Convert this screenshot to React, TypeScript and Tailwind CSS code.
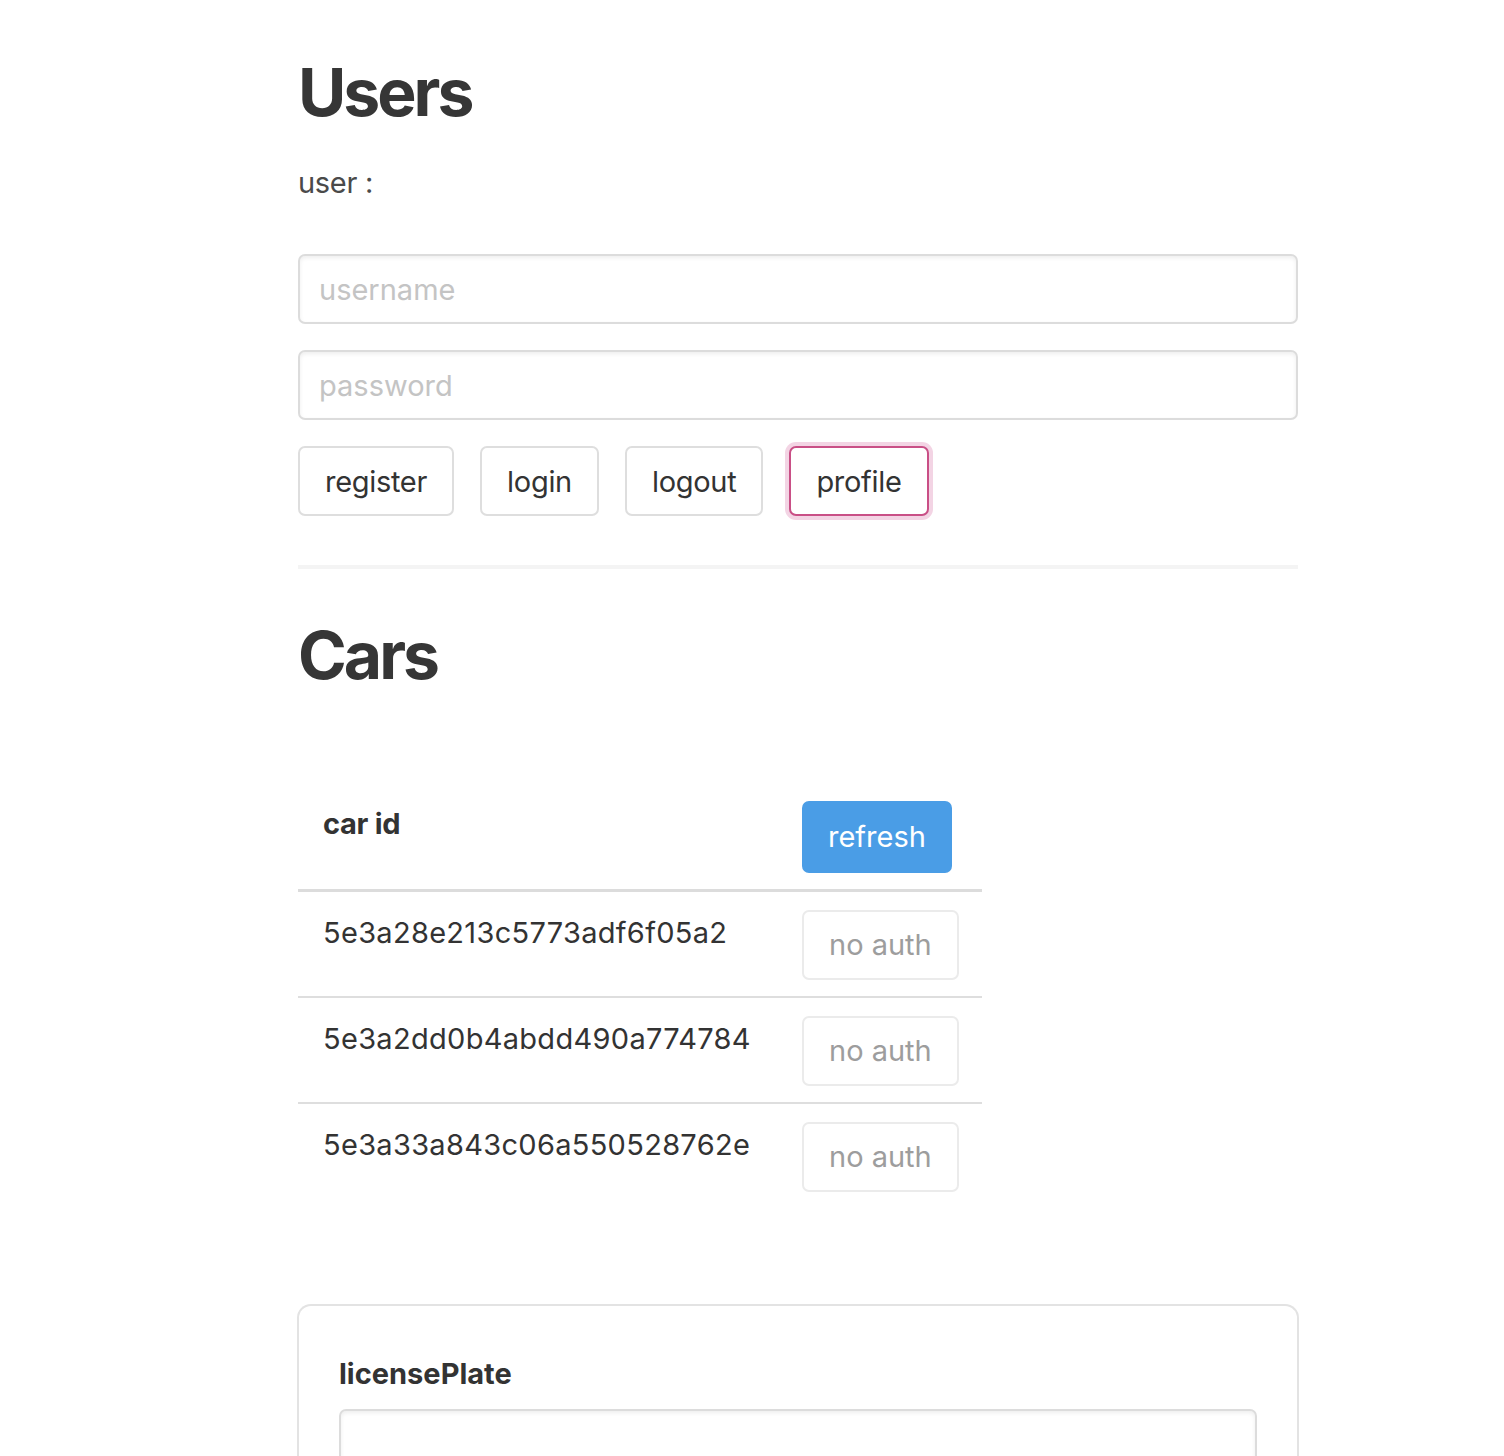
const cars = ['5e3a28e213c5773adf6f05a2', '5e3a2dd0b4abdd490a774784', '5e3a33a843c06a550528762e'];

const inputCls =
  'block h-[70px] w-full rounded-[7px] border-2 border-[#dcdcdc] bg-white px-[19px] text-[29px] text-[#333] shadow-[inset_0_2px_4px_rgba(0,0,0,0.07)] outline-none placeholder:text-[#c4c4c4]';

const btnBase = 'h-[70px] rounded-[7px] border-2 bg-white px-[25px] text-[29px] leading-none tracking-[-0.3px] text-[#333]';

export default function App() {
  return (
    <div className="min-h-[1456px] bg-white font-['Inter',sans-serif] text-[#333]">
      <div className="ml-[298px] w-[1000px] pt-[59px]">
        {/* Users */}
        <h1 className="text-[66px] font-bold leading-[66px] tracking-[-3px] text-[#363636]">Users</h1>
        <p className="mt-[35px] text-[29px] leading-[46px] tracking-[-0.3px] text-[#4a4a4a]">user :</p>

        <div className="mt-[48px] flex flex-col gap-[26px]">
          <input className={inputCls} placeholder="username" />
          <input className={inputCls} placeholder="password" type="password" />
        </div>

        <div className="mt-[26px] flex gap-[26px]">
          <button className={`${btnBase} border-[#dedede]`}>register</button>
          <button className={`${btnBase} border-[#dedede]`}>login</button>
          <button className={`${btnBase} border-[#dedede]`}>logout</button>
          <button className={`${btnBase} border-[#c94f86] shadow-[0_0_0_4px_#f3d4e4]`}>profile</button>
        </div>

        <hr className="mt-[49px] h-[4px] border-0 bg-[#f4f4f4]" />

        {/* Cars */}
        <h1 className="mt-[53px] text-[66px] font-bold leading-[66px] tracking-[-3px] text-[#363636]">Cars</h1>

        <table className="mt-[94px] w-[684px] table-fixed border-collapse text-left text-[29px]">
          <thead>
            <tr className="border-b-[3px] border-[#dcdcdc]">
              <th className="w-[479px] px-[25px] pt-[19px] pb-[16px] align-top leading-[46px] font-bold tracking-[-0.3px] text-[#333]">car id</th>
              <th className="px-[25px] pt-[19px] pb-[16px] align-top">
                <button className="h-[72px] whitespace-nowrap rounded-[7px] bg-[#4a9de6] px-[26px] text-[29px] font-normal text-white">refresh</button>
              </th>
            </tr>
          </thead>
          <tbody>
            {cars.map((id, i) => (
              <tr key={id} className={i < cars.length - 1 ? 'border-b-2 border-[#dedede]' : ''}>
                <td className="whitespace-nowrap px-[25px] pt-[18px] pb-[16px] align-top leading-[46px] tracking-[0.3px] text-[#333]">{id}</td>
                <td className="px-[25px] pt-[18px] pb-[16px] align-top">
                  <button className="h-[70px] whitespace-nowrap rounded-[7px] border-2 border-[#ebebeb] bg-white px-[25px] text-[29px] text-[#9d9d9d]">no auth</button>
                </td>
              </tr>
            ))}
          </tbody>
        </table>

        {/* new car */}
        <div className="mt-[96px] -mx-[1px] rounded-t-[14px] border-2 border-b-0 border-[#e3e3e3] px-[40px] pt-[45px] pb-[40px]">
          <label className="block text-[29px] font-bold leading-[46px] text-[#333]">licensePlate</label>
          <input className={`${inputCls} mt-[12px] w-[918px]`} />
        </div>
      </div>
    </div>
  );
}
